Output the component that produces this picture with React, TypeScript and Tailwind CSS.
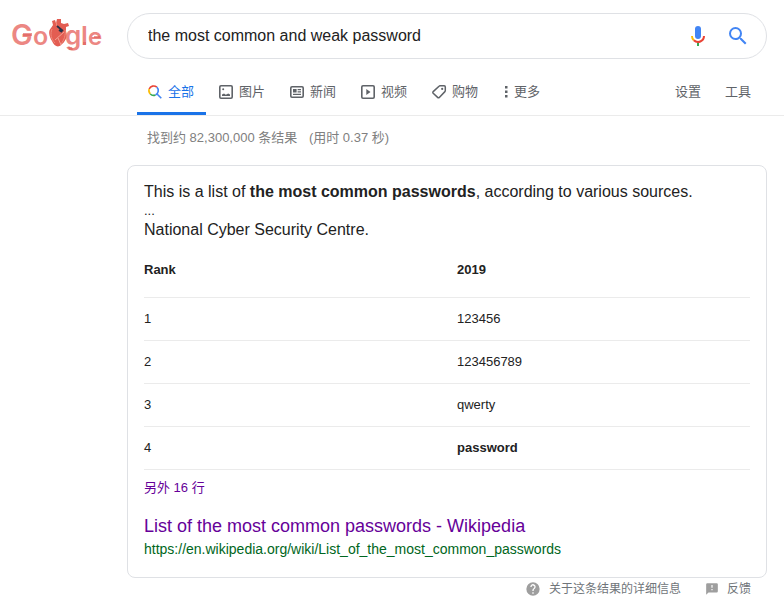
import React from "react";

const tabs: { label: string; icon: React.ReactNode }[] = [
  {
    label: "图片",
    icon: (
      <>
        <rect x="1.8" y="1.8" width="12.4" height="12.4" rx="1.2" fill="none" stroke="currentColor" strokeWidth="1.6" />
        <path d="M4 12v-1.600L6 9.600l1.800 1.200L10.200 9.400l1.800 1.200V12z" fill="currentColor" />
        <circle cx="5.200" cy="5.200" r="1" fill="currentColor" />
      </>
    ),
  },
  {
    label: "新闻",
    icon: (
      <>
        <rect x="1.8" y="2.8" width="12.4" height="10.4" rx="1.2" fill="none" stroke="currentColor" strokeWidth="1.6" />
        <path d="M4 5h3.6v3.4H4zM8.6 5H12v1.2H8.6zM8.6 7.2H12v1.2H8.6zM4 9.8h8V11H4z" fill="currentColor" />
      </>
    ),
  },
  {
    label: "视频",
    icon: (
      <>
        <rect x="1.8" y="1.8" width="12.4" height="12.4" rx="1.2" fill="none" stroke="currentColor" strokeWidth="1.6" />
        <path d="M6.3 5v6l4.2-3z" fill="currentColor" />
      </>
    ),
  },
  {
    label: "购物",
    icon: (
      <>
        <path
          d="M9 1.800h4.200c.700 0 1.100.500 1.100 1.100v3.700c0 .400-.100.700-.400 1L8.300 13.400c-.500.500-1.200.500-1.700 0L2.200 9.200c-.500-.500-.500-1.100 0-1.600L8 2.200c.300-.300.600-.400 1-.400z"
          fill="none"
          stroke="currentColor"
          strokeWidth="1.5"
        />
        <circle cx="11.200" cy="4.900" r="1.100" fill="currentColor" />
      </>
    ),
  },
];

const rows = [
  ["1", "123456"],
  ["2", "123456789"],
  ["3", "qwerty"],
  ["4", "password"],
];

function Logo() {
  return (
    <svg viewBox="0 0 96 42" className="h-[42px] w-24" role="img" aria-label="Google">
      <g fill="#ec8783" className="font-['Inter',sans-serif] text-[26px] font-semibold">
        <text x="1" y="30" className="text-[29px]">G</text>
        <text x="23" y="30" className="text-[25px]">o</text>
        <text x="55" y="30">g</text>
        <text x="71" y="30">l</text>
        <text x="78" y="30" className="text-[24px]">e</text>
      </g>
      <path d="M13 18h9v3h-9zM84 21h6v2h-6zM73 27h3v3h-3zM58 32h4l1 3h-4z" fill="#e0605a" opacity=".65" />
      <path
        d="M41 13l2-3-1-4 3-1 1 3 1-4 4 0 0 4 3 1 4-1 1 3-3 1v4c2 6-1 11-5 14-3 3-7 1-9-4-3-5-4-10-1-13z"
        fill="#e35d52"
      />
      <path d="M42 14c-2 5-1 10 3 14M46 7l1 4M55 15c1 5-1 10-4 14" fill="none" stroke="#f08a7b" strokeWidth="1" />
      <path d="M47 11l6 5M49 15l3 2" fill="none" stroke="#263147" strokeWidth="1.8" />
      <path d="M54 17l-9 8M48 23l3 7" fill="none" stroke="#f6b2a5" strokeWidth="0.8" />
    </svg>
  );
}

function MicIcon() {
  return (
    <svg viewBox="0 0 24 24" className="size-6" aria-hidden="true">
      <path d="M12 15a3 3 0 0 0 3-3V5a3 3 0 0 0-6 0v7a3 3 0 0 0 3 3z" fill="#4285f4" />
      <path d="M11 18h2v4h-2z" fill="#34a853" />
      <path d="M5 12h2c0 1.4.5 2.600 1.500 3.500L7.100 17A7 7 0 0 1 5 12z" fill="#fbbc04" />
      <path d="M12 17a5 5 0 0 1-3.500-1.500L7.100 17A7 7 0 0 0 19 12h-2a5 5 0 0 1-5 5z" fill="#ea4335" />
    </svg>
  );
}

export default function App() {
  return (
    <div className="bg-white pb-2 font-['Liberation_Sans','Noto_Sans_CJK_SC',sans-serif] text-[13px] text-[#222222]">
      <header className="border-b border-[#ebebeb]">
        <div className="flex items-center pt-[13px] pr-[17px]">
          <a href="#" className="flex w-[127px] shrink-0 pl-[10px]">
            <Logo />
          </a>
          <form className="flex h-[46px] max-w-[640px] min-w-0 flex-1 items-center rounded-full border border-[#dfe1e5] pr-4 pl-5" onSubmit={(e) => e.preventDefault()}>
            <input
              aria-label="搜索"
              defaultValue="the most common and weak password"
              className="min-w-0 flex-1 bg-transparent text-base leading-5 outline-none"
            />
            <button type="button" aria-label="语音搜索" className="mr-4">
              <MicIcon />
            </button>
            <button type="submit" aria-label="搜索">
              <svg viewBox="0 0 24 24" className="size-6" aria-hidden="true">
                <path
                  fill="#4285f4"
                  d="M15.500 14h-.790l-.280-.270A6.470 6.470 0 0 0 16 9.500 6.500 6.500 0 1 0 9.500 16c1.610 0 3.090-.590 4.230-1.570l.270.280v.790l5 4.990L20.490 19zm-6 0a4.500 4.500 0 1 1 0-9 4.500 4.500 0 0 1 0 9z"
                />
              </svg>
            </button>
          </form>
        </div>
        <div className="mt-3 pr-[17px] pl-[137px] text-[#5f6368]">
          <div className="flex max-w-[630px] items-stretch justify-between">
            <nav className="flex gap-0.5">
              <a href="#" aria-current="page" className="flex h-11 items-center gap-[5px] border-b-3 border-[#1a73e8] pr-3 pl-2.5 text-[#1a73e8]">
                <svg viewBox="0 0 16 16" className="size-4" fill="none" strokeWidth="1.6" aria-hidden="true">
                  <path d="M2.200 5A4.800 4.800 0 0 1 9.800 3.200" stroke="#ea4335" />
                  <path d="M2.200 5A4.800 4.800 0 0 0 3.300 10" stroke="#fbbc04" />
                  <path d="M3.300 10A4.800 4.800 0 0 0 8.500 11" stroke="#34a853" />
                  <path d="M9.800 3.200A4.800 4.800 0 0 1 8.500 11M9.800 9.800l4.500 4.500" stroke="#4285f4" />
                </svg>
                全部
              </a>
              {tabs.map((tab) => (
                <a key={tab.label} href="#" className="flex h-11 items-center gap-[5px] border-b-3 border-transparent pr-3 pl-2.5">
                  <svg viewBox="0 0 16 16" className="size-4" aria-hidden="true">
                    {tab.icon}
                  </svg>
                  {tab.label}
                </a>
              ))}
              <button type="button" className="flex h-11 items-center gap-1 border-b-3 border-transparent pl-2.5">
                <svg viewBox="0 0 8 16" className="h-4 w-2" fill="currentColor" aria-hidden="true">
                  <path d="M3 2h2.500v2.500H3zM3 6.500h2.500V9H3zM3 11h2.500v2.500H3z" />
                </svg>
                更多
              </button>
            </nav>
            <div className="flex gap-6 border-b-3 border-transparent pr-4">
              <button type="button">设置</button>
              <button type="button">工具</button>
            </div>
          </div>
        </div>
      </header>

      <main className="pr-[17px] pl-[127px]">
        <div className="max-w-[640px]">
          <p className="h-[49px] pt-3 pl-5 leading-5 text-[#808080]">
            找到约 82,300,000 条结果 <span className="ml-2">(用时 0.37 秒)</span>
          </p>
          <section className="rounded-lg border border-[#dfe1e5] px-4 pt-3.5 pb-[17px]">
            <p className="text-base leading-6">
              This is a list of <b>the most common passwords</b>, according to various sources.
            </p>
            <p className="leading-[14px]">...</p>
            <p className="text-base leading-6">National Cyber Security Centre.</p>
            <table className="w-full table-fixed border-separate border-spacing-0 text-left">
              <thead>
                <tr>
                  <th className="h-14 w-[313px] border-b border-[#ebebeb] p-0">Rank</th>
                  <th className="h-14 border-b border-[#ebebeb] p-0">2019</th>
                </tr>
              </thead>
              <tbody>
                {rows.map(([rank, value]) => (
                  <tr key={rank}>
                    <td className="h-[43px] border-b border-[#ebebeb] p-0">{rank}</td>
                    <td className="h-[43px] border-b border-[#ebebeb] p-0">{value === "password" ? <b>{value}</b> : value}</td>
                  </tr>
                ))}
              </tbody>
            </table>
            <a href="#" className="block leading-9 text-[#660099]">
              另外 16 行
            </a>
            <h3 className="mt-2 text-lg leading-6">
              <a href="#" className="text-[#660099]">
                List of the most common passwords - Wikipedia
              </a>
            </h3>
            <cite className="block text-sm leading-[22px] text-[#006621] not-italic">
              https://en.wikipedia.org/wiki/List_of_the_most_common_passwords
            </cite>
          </section>
          <footer className="flex justify-end gap-6 pt-px pr-4 text-xs leading-5 text-[#70757a]">
            <a href="#" className="flex items-center gap-2">
              <svg viewBox="0 0 24 24" className="size-4" fill="#9e9e9e" aria-hidden="true">
                <path d="M12 2a10 10 0 1 0 0 20 10 10 0 0 0 0-20zm1 17h-2v-2h2zm2.070-7.750-.900.920C13.450 12.900 13 13.500 13 15h-2v-.500c0-1.100.450-2.100 1.170-2.830l1.240-1.260A2 2 0 1 0 10 9H8a4 4 0 1 1 7.070 2.250z" />
              </svg>
              关于这条结果的详细信息
            </a>
            <a href="#" className="flex items-center gap-2">
              <svg viewBox="0 0 24 24" className="size-3.5" fill="#9e9e9e" aria-hidden="true">
                <path d="M20 2H4a2 2 0 0 0-2 2v18l4-4h14a2 2 0 0 0 2-2V4a2 2 0 0 0-2-2zm-7 12h-2v-2h2zm0-4h-2V5h2z" />
              </svg>
              反馈
            </a>
          </footer>
        </div>
      </main>
    </div>
  );
}
